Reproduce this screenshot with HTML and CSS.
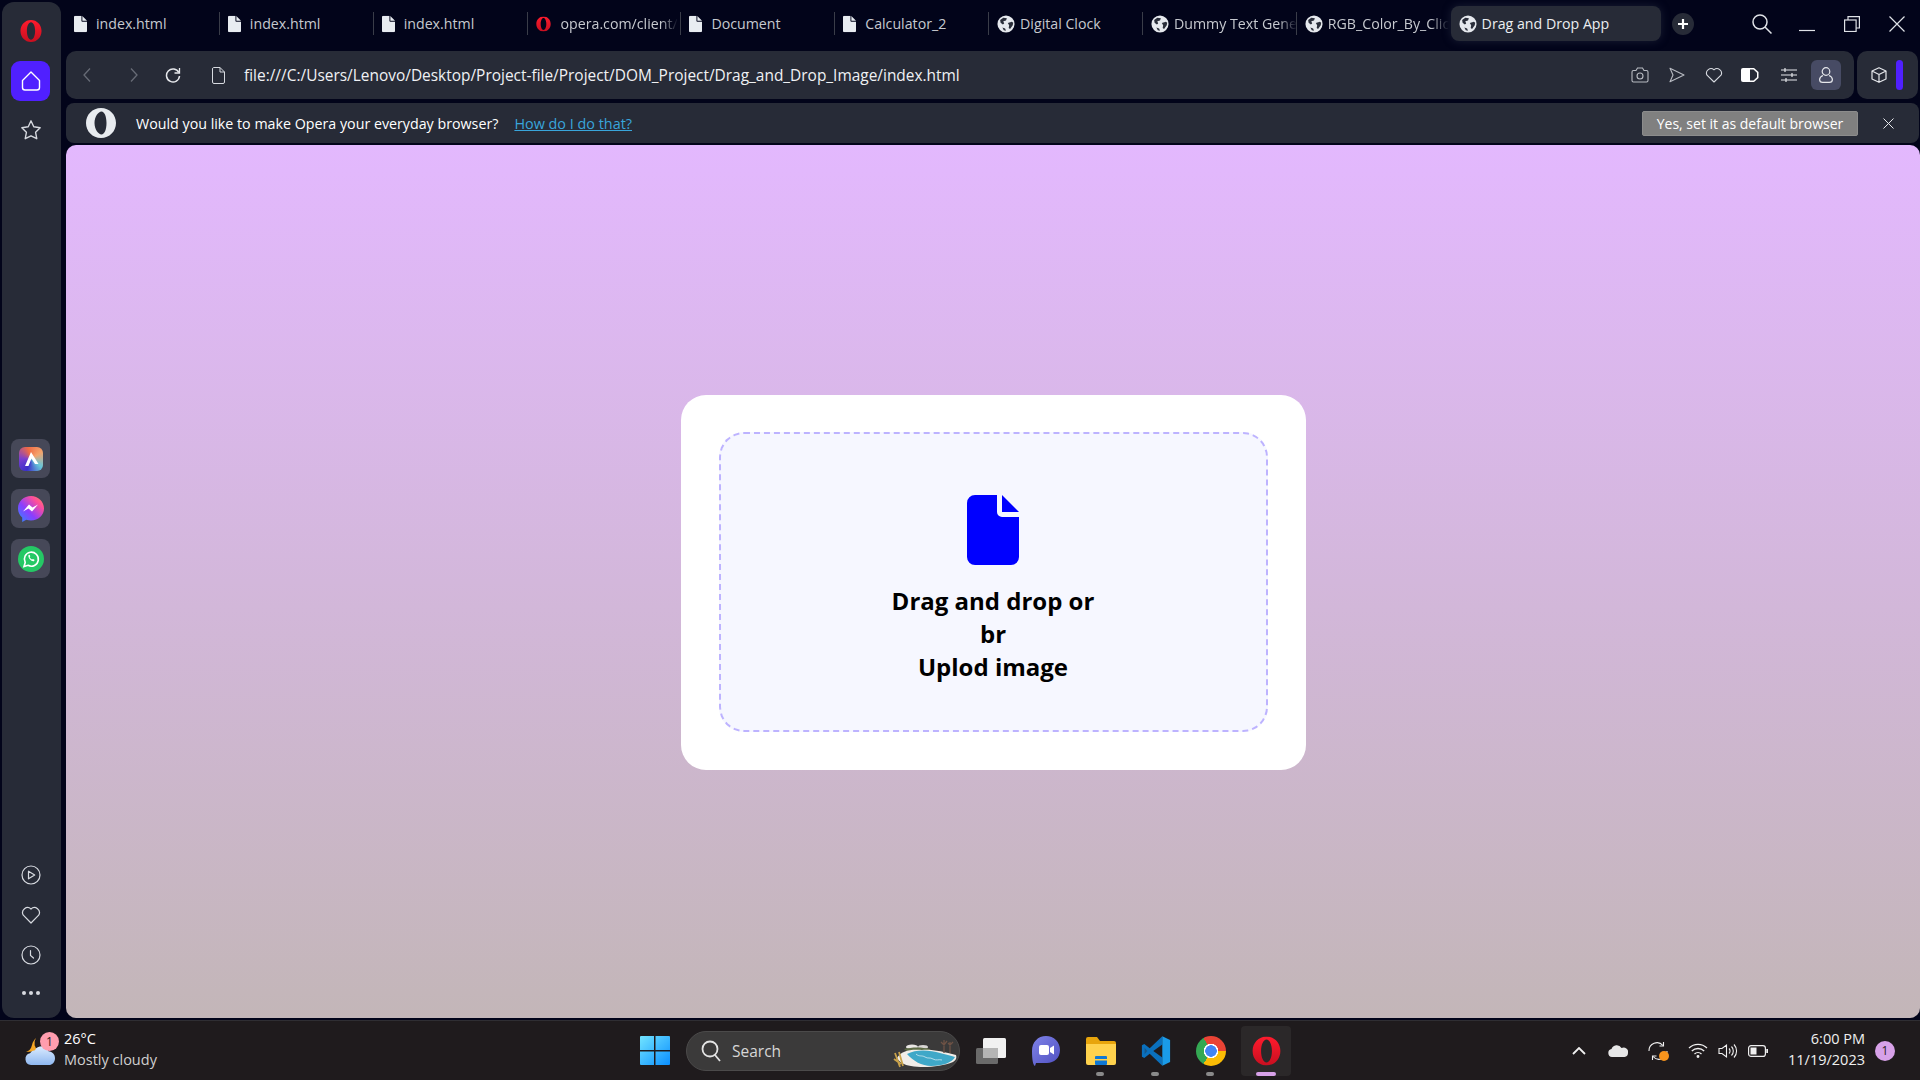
FILE: index.html
```html
<!DOCTYPE html>
<html lang="en">
<head>
<meta charset="utf-8">
<title>Drag and Drop App</title>
<link rel="stylesheet" href="styles.css">
</head>
<body>
<svg class="defs" width="0" height="0" aria-hidden="true">
  <symbol id="doc" viewBox="0 0 14 18"><path fill="#e8ecf1" d="M1.5 0H8v5.500A1 1 0 0 0 9 6.500h5v10A1.500 1.500 0 0 1 12.500 18h-11A1.500 1.500 0 0 1 0 16.500v-15A1.500 1.500 0 0 1 1.500 0z"/><path fill="#e8ecf1" d="M9 .3 14 5.500H9z"/></symbol>
  <symbol id="globe" viewBox="0 0 20 20"><circle cx="10" cy="10" r="9.500" fill="#e6e9ee"/><path fill="#2a2e3a" d="M3.500 5.500 7 3l4 .5-1 2.500-3 1 1 2.500-1.500 1L4 8.500zM12 9l4.500-1.500 1.500 1-.5 3-3 4-1.500-1 .5-3zM6 14l3 1 1 2.500-2.500-.5z"/></symbol>
  <symbol id="opera" viewBox="0 0 24 24"><defs><linearGradient id="og" x1="0" y1="0" x2="0" y2="1"><stop offset="0" stop-color="#ff1b2d"/><stop offset="1" stop-color="#c80f20"/></linearGradient></defs><path fill="url(#og)" fill-rule="evenodd" d="M12 0C5.400 0 .5 5.400.5 12S5.400 24 12 24s11.500-5.400 11.500-12S18.600 0 12 0zm0 2.500c2.600 0 4.500 4.300 4.500 9.500s-1.900 9.500-4.500 9.500S7.500 17.200 7.500 12 9.400 2.500 12 2.500z"/></symbol>
</svg>

<div class="screen">
  <div class="browser">
    <aside class="sidebar">
      <svg class="side-logo" viewBox="0 0 24 24"><use href="#opera"/></svg>
      <div class="home-btn"><svg width="20" height="20" viewBox="0 0 20 20" fill="none" stroke="#fff" stroke-width="1.400"><path d="M10 1 1.500 9.500V16.500a2.500 2.500 0 0 0 2.500 2.500h12a2.500 2.500 0 0 0 2.500-2.500V9.500z" stroke-linejoin="round"/></svg></div>
      <svg class="side-star" viewBox="0 0 24 24" fill="none" stroke="#d7dae0" stroke-width="1.500" stroke-linejoin="round"><path d="m12 2 3 6.500 7 1-5 5 1.300 7L12 18.300 5.700 21.500 7 14.500l-5-5 7-1z"/></svg>
      <div class="side-apps">
        <div class="app-btn"><span class="aria-ico"><svg width="24" height="24" viewBox="0 0 24 24"><path d="m12 5-6 14h3.500l3-7.500L16 17h3.500z" fill="#fff"/></svg></span></div>
        <div class="app-btn"><svg width="26" height="26" viewBox="0 0 26 26"><defs><linearGradient id="ms" x1="0" y1="1" x2="1" y2="0"><stop offset="0" stop-color="#2a8cff"/><stop offset=".4" stop-color="#8a3dff"/><stop offset=".75" stop-color="#ff4f9a"/><stop offset="1" stop-color="#ff8a5c"/></linearGradient></defs><path fill="url(#ms)" d="M13 0C5.800 0 0 5.400 0 12.400c0 3.700 1.600 6.900 4.200 9.100V26l4.100-2.300c1.500.5 3 .7 4.700.7 7.200 0 13-5.300 13-12S20.200 0 13 0z"/><path fill="#fff" d="m5 15.500 6-7 3.500 3 5.500-3-6 7-3.500-3z"/></svg></div>
        <div class="app-btn"><svg width="26" height="26" viewBox="0 0 26 26"><circle cx="13" cy="13" r="13" fill="#25c865"/><path d="M6 20.500 7.200 16.500A7 7 0 1 1 10 19.300z" fill="none" stroke="#fff" stroke-width="1.600"/><path fill="#fff" d="M10.500 9c.6-.6 1.200-.4 1.400.2l.4 1.100-.7.9c.5 1 1.300 1.800 2.400 2.400l.9-.7 1.200.6c.5.300.5.900 0 1.400-1.500 1.300-6.600-2.300-5.600-5.900z"/></svg></div>
      </div>
      <div class="side-tools">
        <svg class="tool" viewBox="0 0 20 20" fill="none" stroke="#d7dae0" stroke-width="1.200"><circle cx="10" cy="10" r="9"/><path d="M7.500 6.200v7.600l6.200-3.800z" stroke-linejoin="round"/></svg>
        <svg class="tool" viewBox="0 0 20 20" fill="none" stroke="#d7dae0" stroke-width="1.200"><path d="M10 18 2.300 10.200A5 5 0 0 1 10 4a5 5 0 0 1 7.700 6.200z" stroke-linejoin="round"/></svg>
        <svg class="tool" viewBox="0 0 20 20" fill="none" stroke="#d7dae0" stroke-width="1.200"><circle cx="10" cy="10" r="9"/><path d="M9.500 5.500v5l3 2.500" stroke-linecap="round"/></svg>
        <div class="dots"><i></i><i></i><i></i></div>
      </div>
    </aside>

    <div class="main">
      <div class="tabstrip">
        <div class="tab"><svg class="tab-ico" viewBox="0 0 14 18"><use href="#doc"/></svg><span class="tab-text">index.html</span></div>
        <div class="tab"><svg class="tab-ico" viewBox="0 0 14 18"><use href="#doc"/></svg><span class="tab-text">index.html</span></div>
        <div class="tab"><svg class="tab-ico" viewBox="0 0 14 18"><use href="#doc"/></svg><span class="tab-text">index.html</span></div>
        <div class="tab"><svg class="tab-ico wide" viewBox="0 0 24 24"><use href="#opera"/></svg><span class="tab-text fade">opera.com/client/</span></div>
        <div class="tab"><svg class="tab-ico" viewBox="0 0 14 18"><use href="#doc"/></svg><span class="tab-text">Document</span></div>
        <div class="tab"><svg class="tab-ico" viewBox="0 0 14 18"><use href="#doc"/></svg><span class="tab-text">Calculator_2</span></div>
        <div class="tab"><svg class="tab-ico globe" viewBox="0 0 20 20"><use href="#globe"/></svg><span class="tab-text">Digital Clock</span></div>
        <div class="tab"><svg class="tab-ico globe" viewBox="0 0 20 20"><use href="#globe"/></svg><span class="tab-text fade">Dummy Text Gene</span></div>
        <div class="tab last"><svg class="tab-ico globe" viewBox="0 0 20 20"><use href="#globe"/></svg><span class="tab-text fade">RGB_Color_By_Clic</span></div>
        <div class="tab active"><svg class="tab-ico globe" viewBox="0 0 20 20"><use href="#globe"/></svg><span class="tab-text">Drag and Drop App</span></div>
        <div class="new-tab"><svg width="10" height="10" viewBox="0 0 10 10"><path d="M5 0v10M0 5h10" stroke="#fff" stroke-width="2.200"/></svg></div>
        <div class="win-controls">
          <svg class="win-search" width="22" height="22" viewBox="0 0 22 22" fill="none" stroke="#dfe2e7" stroke-width="1.500"><circle cx="9" cy="9" r="7"/><path d="m14 14 6.500 6.500"/></svg>
          <svg class="win-min" width="16" height="16" viewBox="0 0 16 16" stroke="#dfe2e7" stroke-width="1.200"><path d="M0 14.500h16"/></svg>
          <svg class="win-max" width="16" height="16" viewBox="0 0 16 16" fill="none" stroke="#dfe2e7" stroke-width="1.200"><rect x=".6" y="4" width="11.500" height="11.500"/><path d="M4 4V.6h11.400V12H12"/></svg>
          <svg class="win-close" width="16" height="16" viewBox="0 0 16 16" stroke="#dfe2e7" stroke-width="1.200"><path d="m.5.500 15 15M15.500.500l-15 15"/></svg>
        </div>
      </div>

      <div class="toolbar">
        <div class="address">
          <svg class="nav nav-back" width="8" height="14" viewBox="0 0 8 14" fill="none" stroke="#676b76" stroke-width="1.300"><path d="M7 .5 1 7l6 6.500"/></svg>
          <svg class="nav nav-fwd" width="8" height="14" viewBox="0 0 8 14" fill="none" stroke="#676b76" stroke-width="1.300"><path d="m1 .5 6 6.500-6 6.500"/></svg>
          <svg class="nav nav-reload" width="16" height="16" viewBox="0 0 16 16" fill="none" stroke="#e6e8ec" stroke-width="1.500"><path d="M13.800 5.500A6.500 6.500 0 1 0 14.500 9"/><path d="M14.500 1v5h-5" stroke-width="1.300"/></svg>
          <svg class="nav nav-file" width="13" height="17" viewBox="0 0 13 17" fill="none" stroke="#d7dae0" stroke-width="1"><path d="M1.500.5H8L12.500 5v10a1.500 1.500 0 0 1-1.500 1.500H2A1.500 1.500 0 0 1 .5 15V2A1.500 1.500 0 0 1 1.500.5zM8 .5V5h4.500"/></svg>
          <span class="url">file:///C:/Users/Lenovo/Desktop/Project-file/Project/DOM_Project/Drag_and_Drop_Image/index.html</span>
          <div class="addr-tools">
            <svg width="18" height="16" viewBox="0 0 18 16" fill="none" stroke="#b8bbc2" stroke-width="1.100"><path d="M1 5a1.500 1.500 0 0 1 1.500-1.500H5L6.500 1h5L13 3.500h2.500A1.500 1.500 0 0 1 17 5v8.500a1.500 1.500 0 0 1-1.500 1.500h-13A1.500 1.500 0 0 1 1 13.500z"/><circle cx="9" cy="9" r="3"/></svg>
            <svg width="16" height="16" viewBox="0 0 16 16" fill="none" stroke="#b8bbc2" stroke-width="1.100"><path d="M1 1.200 15 8 1 14.800 4 8z" stroke-linejoin="round"/></svg>
            <svg width="18" height="16" viewBox="0 0 18 16" fill="none" stroke="#d7dae0" stroke-width="1.100"><path d="M9 15 2 8.200A4.500 4.500 0 0 1 9 2.800a4.500 4.500 0 0 1 7 5.400z" stroke-linejoin="round"/></svg>
            <svg class="tool-bat" width="18" height="14" viewBox="0 0 18 14"><path d="M2 0h11l4.500 4v6L13 14H2a2 2 0 0 1-2-2V2a2 2 0 0 1 2-2z" fill="#fff"/><path d="M9 1.500h3.500l3.500 3.200v4.600l-3.500 3.200H9z" fill="#272b37"/></svg>
            <svg width="16" height="14" viewBox="0 0 16 14" stroke="#e6e8ec" stroke-width="1.200"><path d="M0 2h16M0 7h16M0 12h16M4 0v4M11 5v4M5 10v4"/></svg>
            <div class="profile"><svg width="14" height="16" viewBox="0 0 14 16" fill="none" stroke="#e6e8ec" stroke-width="1.200"><circle cx="7" cy="4.500" r="3.800"/><path d="M4 8.500C1.500 9.500.6 11 .6 12.500c0 1.800 1.200 2.900 3 2.900h6.800c1.800 0 3-1.100 3-2.900 0-1.500-.9-3-3.400-4"/></svg></div>
          </div>
        </div>
        <div class="extensions">
          <svg width="16" height="16" viewBox="0 0 16 16" fill="none" stroke="#e6e8ec" stroke-width="1.200" stroke-linejoin="round"><path d="M8 .8 15 4v8l-7 3.300L1 12V4zM1 4l7 3.500L15 4M8 7.500v7.800"/></svg>
          <div class="ext-bar"></div>
        </div>
      </div>

      <div class="infobar">
        <svg class="info-logo" width="30" height="30" viewBox="0 0 30 30"><path fill="#e8ebef" fill-rule="evenodd" d="M15 0C6.500 0 0 6.700 0 15s6.500 15 15 15 15-6.700 15-15S23.500 0 15 0zm.5 3.500c3 0 5 5.100 5 11.500s-2 11.500-5 11.500-7-5.100-7-11.500 4-11.500 7-11.500z"/></svg>
        <span class="info-text">Would you like to make Opera your everyday browser?</span>
        <a class="info-link" href="#">How do I do that?</a>
        <button class="info-btn" type="button">Yes, set it as default browser</button>
        <svg class="info-close" width="11" height="11" viewBox="0 0 11 11" stroke="#e6e8ec" stroke-width="1"><path d="m.5.500 10 10M10.500.500l-10 10"/></svg>
      </div>

      <div class="content">
        <div class="card">
          <div class="dropzone">
            <svg class="file-icon" width="52" height="70" viewBox="0 0 52 70"><path fill="#0000ff" d="M8 0h22v17a5 5 0 0 0 5 5h17v40a8 8 0 0 1-8 8H8a8 8 0 0 1-8-8V8a8 8 0 0 1 8-8z"/><path fill="#0000ff" d="M35 0 52 17H35z"/></svg>
            <p class="drop-text">Drag and drop or<br>br<br>Uplod image</p>
          </div>
        </div>
      </div>
    </div>
  </div>

  <footer class="taskbar">
    <div class="weather">
      <div class="weather-ico">
        <svg width="30" height="30" viewBox="0 0 30 30"><path fill="#f5a623" d="M11 2a9 9 0 0 0 3 13L1 16c3-1 5-3 6-7 .5-3 2.500-5.500 4-7z"/><defs><linearGradient id="cl" x1="0" y1="0" x2="0" y2="1"><stop offset="0" stop-color="#dcecff"/><stop offset="1" stop-color="#8fb8f0"/></linearGradient></defs><path fill="url(#cl)" d="M6 29a6 6 0 0 1-1-11.800 6 6 0 0 1 5-3c1-3 4-4 7-4 4 0 6 2 6.500 5 4 .5 6.500 3 6.500 7 0 4-3 6.800-6 6.800z"/></svg>
        <span class="weather-badge">1</span>
      </div>
      <div class="weather-text"><span class="temp">26°C</span><span class="cond">Mostly cloudy</span></div>
    </div>

    <div class="task-center">
      <svg class="win-logo" width="30" height="29" viewBox="0 0 30 29"><defs><linearGradient id="wl" x1="0" y1="0" x2="1" y2="1"><stop offset="0" stop-color="#72e4ff"/><stop offset="1" stop-color="#0a8fff"/></linearGradient></defs><path fill="url(#wl)" d="M0 1a1 1 0 0 1 1-1h13v14H0zM15.500 0H29a1 1 0 0 1 1 1v13H15.500zM0 15.500h14V29H1a1 1 0 0 1-1-1zM15.500 15.500H30V28a1 1 0 0 1-1 1H15.500z"/></svg>
      <div class="search">
        <svg width="20" height="22" viewBox="0 0 20 22" fill="none" stroke="#e4e4e4" stroke-width="1.800"><circle cx="9" cy="9" r="7.500"/><path d="m14 15 5 6"/></svg>
        <span class="search-text">Search</span>
        <svg class="search-art" width="66" height="30" viewBox="0 0 66 30">
          <ellipse cx="20" cy="8" rx="6" ry="2.500" fill="#e9e6e4"/><ellipse cx="31" cy="8" rx="5" ry="2" fill="#d9d6d4"/>
          <path fill="#5d6b45" d="M12 10c8-2 18-2 26 0l-2 3H16z"/>
          <path fill="#f1ede8" d="M5 19C9 12 18 10 30 11c10-1 22 2 34 5 1 3 0 5-3 7-12 5-30 6-42 4C12 26 7 23 5 19z"/>
          <path fill="#3fa8c8" d="M15 15C24 10 38 11 48 14c5 1 11 3 15 4-2 5-12 9-24 9-9 0-18-5-24-12z"/>
          <path fill="none" stroke="#cfeaf2" stroke-width=".8" d="M24 15c3 3 6 1 9 3s5 0 8 2 6 0 9 1"/>
          <path stroke="#c9a24a" stroke-width="1.800" fill="none" d="M3 14l5 14M7 13l4 14M2 20l7 5"/>
          <path stroke="#6e5245" stroke-width="1.300" fill="none" d="M52 1v13M58 3v11M49 3l3 3 3-4M56 4l2 2 3-3"/>
        </svg>
      </div>
      <svg class="taskview" width="30" height="26" viewBox="0 0 30 26"><rect y="10" width="22" height="16" rx="1.500" fill="#6a6a6a"/><rect x="7" width="23" height="20" rx="1.500" fill="#f1f1f1"/><rect x="7" y="10" width="15" height="10" fill="#b5b5b5"/></svg>
      <div class="task-app first">
        <svg width="28" height="30" viewBox="0 0 28 30"><defs><linearGradient id="mt" x1="0" y1="0" x2="1" y2="1"><stop offset="0" stop-color="#7f83e8"/><stop offset="1" stop-color="#4f4fc0"/></linearGradient></defs><path fill="url(#mt)" d="M14 0c8 0 14 6 14 14s-6 13-13 13H4l-1 3c-2-1-3-6-3-15C0 6 6 0 14 0z"/><rect x="7" y="9" width="10" height="10" rx="2" fill="#fff"/><path fill="#fff" d="m18 12 4-2.500v9L18 16z"/></svg>
      </div>
      <div class="task-app running">
        <svg width="30" height="28" viewBox="0 0 30 28"><path fill="#e8a50c" d="M0 2a2 2 0 0 1 2-2h9l3 4h14a2 2 0 0 1 2 2v4H0z"/><path fill="#ffd24d" d="M0 7h30v19a2 2 0 0 1-2 2H2a2 2 0 0 1-2-2z"/><rect x="9" y="19" width="12" height="9" rx="1" fill="#0f78d4"/><rect x="9" y="22" width="12" height="1.500" fill="#ffd24d"/></svg>
      </div>
      <div class="task-app running">
        <svg width="30" height="30" viewBox="0 0 100 100"><path fill="#0a70bd" d="M71 1 29 41 11 27 3 31v38l8 4 18-14 42 40V72L41 50 71 28z"/><path fill="#1a9be8" d="M71 1 97 13v74L71 99z"/><path fill="#2a2627" opacity=".35" d="m12 39 9 11-9 11z"/></svg>
      </div>
      <div class="task-app running"><span class="chrome"></span></div>
      <div class="task-app active-app">
        <svg width="29" height="30" viewBox="0 0 24 24"><use href="#opera"/></svg>
      </div>
    </div>

    <div class="tray">
      <svg width="14" height="8" viewBox="0 0 14 8" fill="none" stroke="#f0f0f0" stroke-width="1.800"><path d="m1 7 6-6 6 6"/></svg>
      <svg class="tray-cloud" width="20" height="12" viewBox="0 0 20 12"><path fill="#e6e6e6" d="M4 12a4 4 0 0 1-.5-7.900A5.500 5.500 0 0 1 13.500 3 4.500 4.500 0 0 1 20 8a4 4 0 0 1-3.500 4z"/></svg>
      <div class="tray-sync"><svg width="20" height="20" viewBox="0 0 20 20" fill="none" stroke="#f0f0f0" stroke-width="1.100"><path d="M1 10a8 8 0 0 1 14-5.500M19 10a8 8 0 0 1-14 5.500"/><path d="M15.500 1v4h-4M4.500 19v-4h4"/></svg><i class="sync-dot"></i></div>
      <svg class="tray-wifi" width="20" height="15" viewBox="0 0 20 15" fill="none" stroke="#f0f0f0" stroke-width="1.300"><path d="M1 5a13 13 0 0 1 18 0M3.800 8a9 9 0 0 1 12.400 0M6.500 11a5 5 0 0 1 7 0"/><circle cx="10" cy="13.500" r=".8" fill="#f0f0f0"/></svg>
      <svg class="tray-vol" width="20" height="16" viewBox="0 0 20 16" fill="none" stroke="#f0f0f0" stroke-width="1.100"><path d="M1 5.500h3L8.500 2v12L4 10.500H1zM11 5.500a3.500 3.500 0 0 1 0 5M13.500 3.500a6.500 6.500 0 0 1 0 9M16 1.500a9.500 9.500 0 0 1 0 13"/></svg>
      <svg class="tray-bat" width="20" height="12" viewBox="0 0 20 12"><rect x=".6" y=".6" width="16.800" height="10.800" rx="2.500" fill="none" stroke="#f0f0f0" stroke-width="1.200"/><rect x="2.500" y="2.500" width="6" height="7" fill="#f0f0f0"/><rect x="18.300" y="4" width="1.700" height="4" fill="#f0f0f0"/></svg>
      <div class="clock"><span>6:00 PM</span><span>11/19/2023</span></div>
      <span class="notif">1</span>
    </div>
  </footer>
</div>
</body>
</html>
```
FILE: styles.css
```css
* { box-sizing: border-box; }
html, body { margin: 0; padding: 0; height: 100%; overflow: hidden; }
body { font-family: "Open Sans", "Noto Sans", sans-serif; background: #02041a; color: #fff; }
.defs { position: absolute; }

.screen { width: 1920px; height: 1080px; display: flex; flex-direction: column; }
.browser { height: 1020px; display: flex; background: #02041a; }

/* sidebar */
.sidebar { width: 59px; margin: 2px 0 2px 2px; padding: 18px 2px 23px 0; background: #272b37; border-radius: 12px; display: flex; flex-direction: column; align-items: center; flex: none; }
.side-logo { width: 22px; height: 22px; }
.home-btn { width: 39px; height: 40px; margin-top: 19px; background: #5020ff; border-radius: 9px; display: flex; align-items: center; justify-content: center; }
.side-star { width: 22px; height: 22px; margin-top: 18px; }
.side-apps { margin-top: 298px; display: flex; flex-direction: column; gap: 11px; }
.app-btn { width: 39px; height: 39px; background: #464858; border-radius: 8px; display: flex; align-items: center; justify-content: center; }
.aria-ico { width: 24px; height: 24px; border-radius: 6px; display: flex; background: conic-gradient(from 200deg, #3b2fc9, #7a3fd0, #ef6a45, #f5a36b, #68c6d9, #3b2fc9); }
.side-tools { margin-top: auto; display: flex; flex-direction: column; align-items: center; gap: 20px; }
.tool { width: 20px; height: 20px; }
.dots { display: flex; gap: 3px; margin-top: 6px; }
.dots i { width: 4px; height: 4px; border-radius: 50%; background: #d7dae0; }

/* main column */
.main { flex: 1; min-width: 0; margin-left: 5px; display: flex; flex-direction: column; }

/* tabs */
.tabstrip { height: 51px; padding-top: 6px; display: flex; align-items: flex-start; }
.tab { width: 153.85px; height: 35px; flex: none; display: flex; align-items: center; gap: 9px; padding: 0 0 0 8px; position: relative; color: #c6c9cf; font-size: 14.200px; }
.tab::after { content: ""; position: absolute; right: 0; top: 6px; height: 23px; width: 1px; background: #3a3d49; }
.tab.last::after, .tab.active::after { display: none; }
.tab-ico { width: 13px; height: 18px; flex: none; }
.tab-ico.wide { width: 15px; margin-right: 1px; }
.tab-ico.globe { width: 18px; height: 18px; margin-right: -4px; }
.tab-text { white-space: nowrap; min-width: 0; }
.tab-text.fade { -webkit-mask-image: linear-gradient(to right, #000 85%, transparent 100%); mask-image: linear-gradient(to right, #000 85%, transparent 100%); }
.tab.active { width: 210px; background: #272b37; color: #eceef1; border-radius: 8px; box-shadow: 0 0 10px rgba(70, 76, 100, .35); }
.new-tab { width: 22px; height: 22px; margin: 7px 0 0 11px; border-radius: 50%; background: #272b37; display: flex; align-items: center; justify-content: center; flex: none; }
.win-controls { margin-left: auto; margin-right: 15px; display: flex; align-items: center; height: 36px; }
.win-search { margin-right: 26px; }
.win-min { margin-right: 29px; }
.win-max { margin-right: 29px; }

/* address */
.toolbar { height: 48px; margin-right: 2px; display: flex; gap: 3px; }
.address { flex: 1; min-width: 0; background: #272b37; border-radius: 10px; display: flex; align-items: center; padding-left: 17px; }
.nav { flex: none; }
.nav-fwd { margin-left: 39px; }
.nav-reload { margin-left: 27px; }
.nav-file { margin-left: 31px; }
.url { margin-left: 19px; font-size: 15.450px; color: #eff1f4; white-space: nowrap; }
.addr-tools { margin-left: auto; margin-right: 13px; display: flex; align-items: center; gap: 20px; }
.tool-bat { margin: 0 2px 0 -2px; }
.profile { width: 30px; height: 30px; margin-left: -6px; background: #474b64; border-radius: 6px; display: flex; align-items: center; justify-content: center; }
.extensions { width: 61px; background: #272b37; border-radius: 10px; display: flex; align-items: center; padding-left: 14px; }
.ext-bar { width: 7px; height: 30px; margin-left: 9px; background: #5020ff; border-radius: 4px; }

/* infobar */
.infobar { height: 40px; margin: 4px 1px 0 0; background: #272b37; border-radius: 8px; display: flex; align-items: center; padding-left: 20px; font-size: 14.250px; }
.info-text { margin-left: 20px; color: #fff; white-space: nowrap; }
.info-link { margin-left: 16px; color: #39a5db; text-decoration: underline; white-space: nowrap; font-size: 14.400px; }
.info-btn { margin-left: auto; width: 216px; height: 25px; padding: 0; border: 1px solid #8c8c8c; border-radius: 2px; background: #808080; color: #fff; font: inherit; font-size: 14px; }
.info-close { margin: 0 25px 0 25px; }

/* page */
.content { flex: 1; margin: 2px 0 2px; border-radius: 10px; background: linear-gradient(#e3b8fe, #c3b6b8); display: flex; align-items: center; justify-content: center; }
.card { width: 625px; height: 375px; margin-top: 2px; padding: 37px 38px 38px; background: #fff; border-radius: 25px; }
.dropzone { height: 100%; background: #f6f7ff; border: 2px dashed #bdb3ff; border-radius: 25px; display: flex; flex-direction: column; align-items: center; padding-top: 61px; }
.file-icon { flex: none; }
.drop-text { margin: 19px 0 0; color: #000; font-size: 24px; font-weight: 700; line-height: 33px; text-align: center; }

/* taskbar */
.taskbar { height: 60px; background: #1f1b1d; border-top: 1px solid #2f2e33; display: flex; align-items: center; }
.weather { width: 640px; padding-left: 25px; display: flex; align-items: center; flex: none; }
.weather-ico { position: relative; width: 30px; height: 30px; }
.weather-badge { position: absolute; left: 15px; top: -4px; width: 19px; height: 19px; border-radius: 50%; background: #ff9dae; color: #2a1c20; font-size: 12px; line-height: 19px; text-align: center; }
.weather-text { margin-left: 9px; padding-bottom: 4px; display: flex; flex-direction: column; font-size: 14.500px; line-height: 21px; }
.temp { color: #fff; }
.cond { color: #cfcfcf; }

.task-center { display: flex; align-items: center; height: 100%; flex: none; }
.win-logo { flex: none; }
.search { width: 274px; height: 40px; margin-left: 16px; padding-left: 14px; background: #3b3a3a; border: 1px solid #4b4a4a; border-radius: 20px; display: flex; align-items: center; position: relative; }
.search-text { margin-left: 11px; color: #d6d6d6; font-size: 15.500px; }
.search-art { position: absolute; right: 1px; top: 7px; }
.taskview { margin-left: 16px; flex: none; }
.task-app { width: 55px; height: 50px; display: flex; align-items: center; justify-content: center; position: relative; flex: none; }
.task-app.first { margin-left: 12px; }
.task-app.running::after { content: ""; position: absolute; left: 23px; bottom: 0; width: 8px; height: 4px; background: #8a8a8a; border-radius: 2px; }
.chrome { width: 30px; height: 30px; border-radius: 50%; background: radial-gradient(circle, #4285f4 0 5.500px, #fff 6px 7px, transparent 7.500px), conic-gradient(from 330deg, #ea4335 0 120deg, #fbbc05 120deg 240deg, #34a853 240deg 360deg); }
.active-app { width: 50px; margin-left: 3px; background: #2b2829; border-radius: 4px; }
.active-app::after { content: ""; position: absolute; left: 15px; bottom: 0; width: 20px; height: 4px; background: #d7a1e8; border-radius: 2px; }

.tray { margin-left: auto; display: flex; align-items: center; padding-right: 25px; }
.tray-cloud { margin-left: 22px; }
.tray-sync { margin-left: 20px; position: relative; width: 20px; height: 20px; }
.sync-dot { position: absolute; right: -1px; bottom: 0; width: 10px; height: 10px; border-radius: 50%; background: #f7941d; }
.tray-wifi { margin-left: 20px; }
.tray-vol { margin-left: 10px; }
.tray-bat { margin-left: 10px; }
.clock { margin-left: 20px; padding-bottom: 3px; display: flex; flex-direction: column; align-items: flex-end; font-size: 14.500px; line-height: 21px; color: #efefef; }
.notif { margin-left: 10px; width: 20px; height: 20px; border-radius: 50%; background: #d7a1e8; color: #2a1c20; font-size: 12px; line-height: 20px; text-align: center; }
```
